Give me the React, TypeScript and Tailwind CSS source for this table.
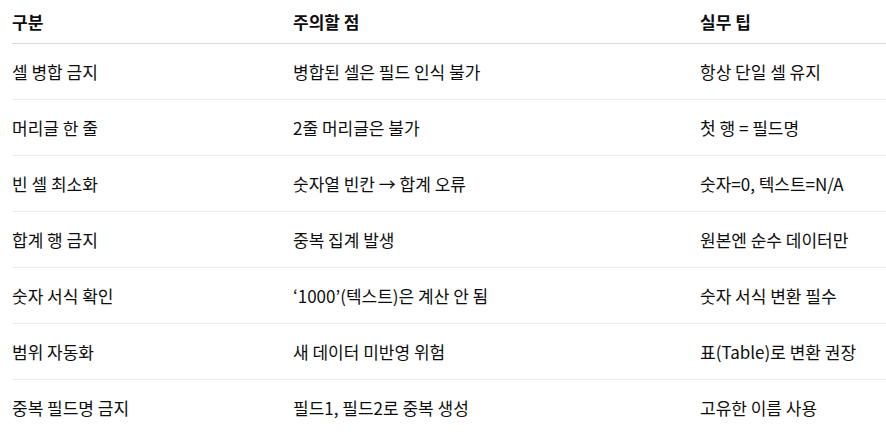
const rows: [string, string, string][] = [
  ['셀 병합 금지', '병합된 셀은 필드 인식 불가', '항상 단일 셀 유지'],
  ['머리글 한 줄', '2줄 머리글은 불가', '첫 행 = 필드명'],
  ['빈 셀 최소화', '숫자열 빈칸 → 합계 오류', '숫자=0, 텍스트=N/A'],
  ['합계 행 금지', '중복 집계 발생', '원본엔 순수 데이터만'],
  ['숫자 서식 확인', '‘1000’(텍스트)은 계산 안 됨', '숫자 서식 변환 필수'],
  ['범위 자동화', '새 데이터 미반영 위험', '표(Table)로 변환 권장'],
  ['중복 필드명 금지', '필드1, 필드2로 중복 생성', '고유한 이름 사용'],
]

export default function App() {
  return (
    <div className="w-[886px] h-[432px] overflow-hidden bg-white pl-[12px] text-[17px] text-[#0d0d0d] [font-family:'Noto_Sans_CJK_KR','Noto_Sans',sans-serif]">
      <div className="grid grid-cols-[281px_407px_186px] h-[44px] items-center border-b border-[#d9d9d9] font-semibold">
        <div>구분</div>
        <div>주의할 점</div>
        <div>실무 팁</div>
      </div>
      {rows.map((r, i) => (
        <div
          key={i}
          className="grid grid-cols-[281px_407px_186px] h-[56px] items-center border-b border-[#ececec]"
        >
          <div>{r[0]}</div>
          <div>{r[1]}</div>
          <div>{r[2]}</div>
        </div>
      ))}
    </div>
  )
}
